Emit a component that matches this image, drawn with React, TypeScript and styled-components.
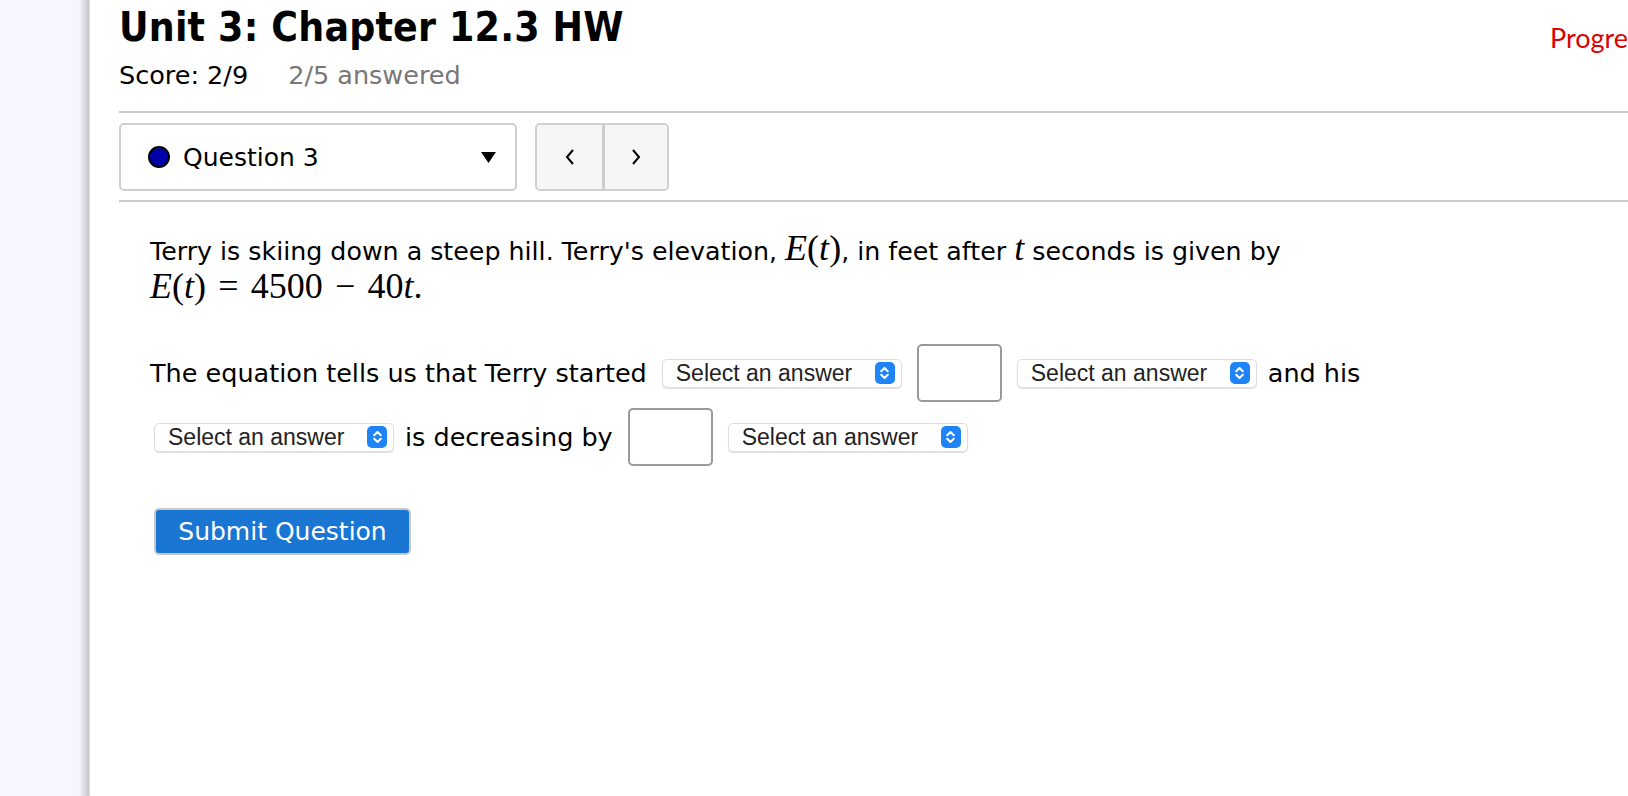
import React from 'react';
import styled, { createGlobalStyle } from 'styled-components';

const GlobalStyle = createGlobalStyle`
  html, body {
    margin: 0;
    padding: 0;
    background: #ffffff;
    overflow: hidden;
  }
  body {
    font-family: "DejaVu Sans", Verdana, sans-serif;
    color: #000;
  }
`;

const Page = styled.div`
  display: flex;
  min-height: 796px;
  width: 1628px;
  overflow: hidden;
`;

const Sidebar = styled.aside`
  flex: 0 0 90px;
  background: linear-gradient(
    to right,
    #f5f6fe 0,
    #f5f6fe 79px,
    #e6e6ec 82px,
    #cfcfd5 87px,
    #c9c9cf 89px,
    #e4e4e8 90px
  );
`;

const Main = styled.main`
  flex: 1;
  padding-left: 29px;
  min-width: 0;
`;

const Header = styled.header`
  display: grid;
  grid-template-columns: 1431px max-content;
  align-items: start;
`;

const Title = styled.h1`
  margin: 0;
  padding-top: 5px;
  font-family: "DejaVu Sans Condensed", "DejaVu Sans", sans-serif;
  font-size: 40.5px;
  line-height: 44px;
  font-weight: 700;
  letter-spacing: 0.2px;
`;

const Progress = styled.div`
  padding-top: 21px;
  font-family: Lato, "Open Sans", sans-serif;
  font-size: 27px;
  color: #dd0000;
  white-space: nowrap;
`;

const ScoreLine = styled.div`
  display: flex;
  gap: 40px;
  margin-top: 11px;
  font-size: 25.5px;
  line-height: 30px;
`;

const ScoreItem = styled.span<{ $muted?: boolean }>`
  color: ${p => (p.$muted ? '#777' : '#000')};
`;

const Rule = styled.hr`
  margin: 0;
  border: 0;
  border-top: 2px solid #cccccc;
`;

const TopRule = styled(Rule)`
  margin-top: 21px;
`;

const Toolbar = styled.div`
  display: flex;
  gap: 18px;
  padding: 10px 0 9px;
`;

const QuestionPicker = styled.div`
  width: 398px;
  height: 68px;
  box-sizing: border-box;
  border: 2px solid #d0d0d0;
  border-radius: 5px;
  display: flex;
  align-items: center;
  padding: 0 19px 0 27px;
  font-size: 25px;
`;

const Dot = styled.span`
  width: 18px;
  height: 18px;
  border-radius: 50%;
  background: #0000a8;
  border: 2px solid #000;
  margin-right: 13px;
`;

const PickerLabel = styled.span`
  flex: 1;
`;

const NavGroup = styled.div`
  display: flex;
  height: 68px;
  box-sizing: border-box;
  border: 2px solid #d0d0d0;
  border-radius: 5px;
  overflow: hidden;
  background: #f6f6f6;
`;

const NavButton = styled.button`
  width: 65px;
  height: 100%;
  border: 0;
  background: #f6f6f6;
  display: flex;
  align-items: center;
  justify-content: center;
  padding: 0;
  & + & {
    border-left: 3px solid #cccccc;
  }
`;

const Content = styled.section`
  padding: 31px 0 0 31px;
`;

const Paragraph = styled.p`
  margin: 0;
  font-size: 25.3px;
  line-height: 38px;
`;

const MathText = styled.span`
  font-family: "Liberation Serif", "DejaVu Serif", serif;
  font-size: 36px;
  line-height: 0;
`;

const MathVar = styled(MathText).attrs({ as: 'i' })``;

const MathOp = styled(MathText)`
  margin: 0 0.34em;
`;

const AnswerLine = styled.div`
  display: flex;
  flex-wrap: wrap;
  align-items: center;
  column-gap: 11px;
  row-gap: 6px;
  margin-top: 35px;
  max-width: 1260px;
  font-size: 25.5px;
`;

const Words = styled.span`
  line-height: 58px;
`;

const SelectBox = styled.div`
  width: 240px;
  height: 29px;
  margin-left: 4px;
  box-sizing: border-box;
  background: #fff;
  border: 1px solid #dedede;
  border-radius: 5px;
  box-shadow: 0 1px 1px rgba(0, 0, 0, 0.12);
  display: flex;
  align-items: center;
  justify-content: space-between;
  padding: 0 6px 0 13px;
  font-family: "Liberation Sans", Arial, sans-serif;
  font-size: 23px;
  color: #222;
`;

const Chevron = styled.span`
  width: 20px;
  height: 22px;
  border-radius: 5px;
  background: #1f84f7;
  display: flex;
  align-items: center;
  justify-content: center;
`;

const BlankInput = styled.input`
  width: 85px;
  height: 58px;
  margin-left: 4px;
  box-sizing: border-box;
  border: 2px solid #9a9a9a;
  border-radius: 5px;
  background: #fff;
`;

const SubmitButton = styled.button`
  margin: 42px 0 0 4px;
  width: 257px;
  height: 47px;
  padding: 0;
  background: #1976d2;
  color: #fff;
  border: 2px solid #c8c8c8;
  border-radius: 5px;
  font-family: "DejaVu Sans", Verdana, sans-serif;
  font-size: 25px;
`;

const Select: React.FC = () => (
  <SelectBox>
    <span>Select an answer</span>
    <Chevron>
      <svg width="11" height="16" viewBox="0 0 11 16">
        <path d="M2.2 6.3 L5.5 3 L8.8 6.3 M2.2 9.7 L5.5 13 L8.8 9.7" fill="none" stroke="#fff" strokeWidth="2" strokeLinecap="round" strokeLinejoin="round" />
      </svg>
    </Chevron>
  </SelectBox>
);

export default function App() {
  return (
    <>
      <GlobalStyle />
      <Page>
        <Sidebar />
        <Main>
          <Header>
            <div>
              <Title>Unit 3: Chapter 12.3 HW</Title>
              <ScoreLine>
                <ScoreItem>Score: 2/9</ScoreItem>
                <ScoreItem $muted>2/5 answered</ScoreItem>
              </ScoreLine>
            </div>
            <Progress>Progress saved</Progress>
          </Header>
          <TopRule />
          <Toolbar>
            <QuestionPicker>
              <Dot />
              <PickerLabel>Question 3</PickerLabel>
              <svg width="15" height="11" viewBox="0 0 15 11">
                <path d="M0 0 H15 L7.5 11 Z" fill="#000" />
              </svg>
            </QuestionPicker>
            <NavGroup>
              <NavButton aria-label="Previous">
                <svg width="12" height="18" viewBox="0 0 12 18">
                  <path d="M9 2 L3 9 L9 16" fill="none" stroke="#000" strokeWidth="2" />
                </svg>
              </NavButton>
              <NavButton aria-label="Next">
                <svg width="12" height="18" viewBox="0 0 12 18">
                  <path d="M3 2 L9 9 L3 16" fill="none" stroke="#000" strokeWidth="2" />
                </svg>
              </NavButton>
            </NavGroup>
          </Toolbar>
          <Rule />
          <Content>
            <Paragraph>
              Terry is skiing down a steep hill. Terry's elevation, <MathVar>E</MathVar>
              <MathText>(</MathText>
              <MathVar>t</MathVar>
              <MathText>)</MathText>, in feet after <MathVar>t</MathVar> seconds is given by
              <br />
              <MathVar>E</MathVar>
              <MathText>(</MathText>
              <MathVar>t</MathVar>
              <MathText>)</MathText>
              <MathOp>=</MathOp>
              <MathText>4500</MathText>
              <MathOp>−</MathOp>
              <MathText>40</MathText>
              <MathVar>t</MathVar>
              <MathText>.</MathText>
            </Paragraph>
            <AnswerLine>
              <Words>The equation tells us that Terry started</Words>
              <Select />
              <BlankInput />
              <Select />
              <Words>and his</Words>
              <Select />
              <Words>is decreasing by</Words>
              <BlankInput />
              <Select />
            </AnswerLine>
            <SubmitButton>Submit Question</SubmitButton>
          </Content>
        </Main>
      </Page>
    </>
  );
}
